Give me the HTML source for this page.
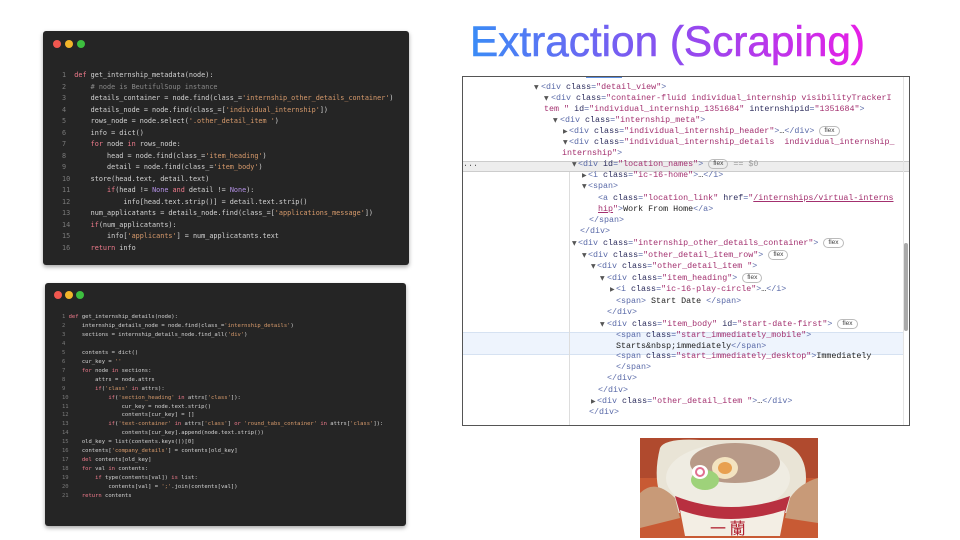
<!DOCTYPE html>
<html><head><meta charset="utf-8"><style>
*{margin:0;padding:0;box-sizing:border-box}
body{width:960px;height:540px;background:#fff;position:relative;overflow:hidden;font-family:"Liberation Sans",sans-serif}
.box{position:absolute;background:#252525;border-radius:3px;box-shadow:0 2px 4px rgba(0,0,0,.35)}
.dot{position:absolute;width:8px;height:8px;border-radius:50%}
.code{position:absolute;font-family:"DejaVu Sans Mono","Liberation Mono",monospace;color:#d4d4d4;white-space:pre}
.code div{position:absolute;left:0}
.n{color:#7a7a7a}.k{color:#f07b8c}.s{color:#d89b6c}.c{color:#8a8a8a}.v{color:#b592e8}
#dt{position:absolute;left:462px;top:76px;width:448px;height:350px;border:1.5px solid #555;background:#fff;overflow:hidden}
.l{position:absolute;font-family:"Liberation Mono",monospace;font-size:8.35px;white-space:pre;color:#222;line-height:11px}
.t{color:#5a6aa8}.a{color:#2c2c5c}.q{color:#a3306f}.u{color:#a3306f;text-decoration:underline}
.tri{position:absolute;font-size:6px;color:#555;font-family:"DejaVu Sans",sans-serif;line-height:11px}
.fl{display:inline-block;border:1px solid #bbb;border-radius:6px;font-size:6.5px;padding:0 4px;line-height:8px;color:#444;font-family:"Liberation Sans",sans-serif;vertical-align:1px}
</style></head><body>

<div class="box" style="left:43px;top:31px;width:366px;height:234px">
<div class="dot" style="left:10px;top:9px;background:#f0574f"></div>
<div class="dot" style="left:22px;top:9px;background:#f2b52a"></div>
<div class="dot" style="left:34px;top:9px;background:#3dbf3f"></div>
</div>
<div class="code" style="left:62px;top:70px;font-size:6.8px;line-height:11.5px">
<div style="top:0"><span class="n">1</span>  <span class="k">def</span> get_internship_metadata(node):</div>
<div style="top:11.5px"><span class="n">2</span>      <span class="c"># node is BeutifulSoup instance</span></div>
<div style="top:23px"><span class="n">3</span>      details_container = node.find(class_=<span class="s">'internship_other_details_container'</span>)</div>
<div style="top:34.5px"><span class="n">4</span>      details_node = node.find(class_=[<span class="s">'individual_internship'</span>])</div>
<div style="top:46px"><span class="n">5</span>      rows_node = node.select(<span class="s">'.other_detail_item '</span>)</div>
<div style="top:57.5px"><span class="n">6</span>      info = dict()</div>
<div style="top:69px"><span class="n">7</span>      <span class="k">for</span> node <span class="k">in</span> rows_node:</div>
<div style="top:80.5px"><span class="n">8</span>          head = node.find(class_=<span class="s">'item_heading'</span>)</div>
<div style="top:92px"><span class="n">9</span>          detail = node.find(class_=<span class="s">'item_body'</span>)</div>
<div style="top:103.5px"><span class="n">10</span>     store(head.text, detail.text)</div>
<div style="top:115px"><span class="n">11</span>         <span class="k">if</span>(head != <span class="v">None</span> <span class="k">and</span> detail != <span class="v">None</span>):</div>
<div style="top:126.5px"><span class="n">12</span>             info[head.text.strip()] = detail.text.strip()</div>
<div style="top:138px"><span class="n">13</span>     num_applicatants = details_node.find(class_=[<span class="s">'applications_message'</span>])</div>
<div style="top:149.5px"><span class="n">14</span>     <span class="k">if</span>(num_applicatants):</div>
<div style="top:161px"><span class="n">15</span>         info[<span class="s">'applicants'</span>] = num_applicatants.text</div>
<div style="top:172.5px"><span class="n">16</span>     <span class="k">return</span> info</div>
</div>

<div class="box" style="left:45px;top:283px;width:361px;height:243px">
<div class="dot" style="left:9px;top:8px;background:#f0574f"></div>
<div class="dot" style="left:20px;top:8px;background:#f2b52a"></div>
<div class="dot" style="left:31px;top:8px;background:#3dbf3f"></div>
</div>
<div class="code" style="left:62px;top:313px;font-size:5.5px;line-height:8.95px">
<div style="top:0"><span class="n">1</span> <span class="k">def</span> get_internship_details(node):</div>
<div style="top:8.95px"><span class="n">2</span>     internship_details_node = node.find(class_=<span class="s">'internship_details'</span>)</div>
<div style="top:17.9px"><span class="n">3</span>     sections = internship_details_node.find_all(<span class="s">'div'</span>)</div>
<div style="top:26.85px"><span class="n">4</span></div>
<div style="top:35.8px"><span class="n">5</span>     contents = dict()</div>
<div style="top:44.75px"><span class="n">6</span>     cur_key = <span class="s">''</span></div>
<div style="top:53.7px"><span class="n">7</span>     <span class="k">for</span> node <span class="k">in</span> sections:</div>
<div style="top:62.65px"><span class="n">8</span>         attrs = node.attrs</div>
<div style="top:71.6px"><span class="n">9</span>         <span class="k">if</span>(<span class="s">'class'</span> <span class="k">in</span> attrs):</div>
<div style="top:80.55px"><span class="n">10</span>            <span class="k">if</span>(<span class="s">'section_heading'</span> <span class="k">in</span> attrs[<span class="s">'class'</span>]):</div>
<div style="top:89.5px"><span class="n">11</span>                cur_key = node.text.strip()</div>
<div style="top:98.45px"><span class="n">12</span>                contents[cur_key] = []</div>
<div style="top:107.4px"><span class="n">13</span>            <span class="k">if</span>(<span class="s">'text-container'</span> <span class="k">in</span> attrs[<span class="s">'class'</span>] <span class="k">or</span> <span class="s">'round_tabs_container'</span> <span class="k">in</span> attrs[<span class="s">'class'</span>]):</div>
<div style="top:116.35px"><span class="n">14</span>                contents[cur_key].append(node.text.strip())</div>
<div style="top:125.3px"><span class="n">15</span>    old_key = list(contents.keys())[0]</div>
<div style="top:134.25px"><span class="n">16</span>    contents[<span class="s">'company_details'</span>] = contents[old_key]</div>
<div style="top:143.2px"><span class="n">17</span>    <span class="k">del</span> contents[old_key]</div>
<div style="top:152.15px"><span class="n">18</span>    <span class="k">for</span> val <span class="k">in</span> contents:</div>
<div style="top:161.1px"><span class="n">19</span>        <span class="k">if</span> type(contents[val]) <span class="k">is</span> list:</div>
<div style="top:170.05px"><span class="n">20</span>            contents[val] = <span class="s">';'</span>.join(contents[val])</div>
<div style="top:179px"><span class="n">21</span>    <span class="k">return</span> contents</div>
</div>

<svg style="position:absolute;left:0;top:0" width="960" height="80">
<defs><linearGradient id="g" x1="470" y1="0" x2="866" y2="0" gradientUnits="userSpaceOnUse">
<stop offset="0" stop-color="#3a8cf6"/><stop offset="0.5" stop-color="#8a4ff0"/><stop offset="1" stop-color="#e81ee6"/></linearGradient></defs>
<text x="470" y="56" font-family="Liberation Sans, sans-serif" font-size="43" fill="url(#g)" stroke="url(#g)" stroke-width="0.6" textLength="395" lengthAdjust="spacingAndGlyphs">Extraction (Scraping)</text>
</svg>

<div id="dt">
<div style="position:absolute;left:0;top:84px;width:446px;height:11px;background:#ededed;border-top:1px solid #ccc;border-bottom:1px solid #ccc"></div>
<div style="position:absolute;left:0;top:255px;width:440px;height:23px;background:#eef4fd;border-top:1px solid #d6e2f2;border-bottom:1px solid #d6e2f2"></div>
<div style="position:absolute;left:106px;top:95px;width:1px;height:260px;background:#ddd"></div>
<div style="position:absolute;left:123px;top:-1px;width:36px;height:2px;background:#5a8de0"></div>
<div style="position:absolute;left:440px;top:0;width:1px;height:350px;background:#e4e4e4"></div>
<div style="position:absolute;left:441px;top:166px;width:4px;height:88px;background:#aaa;border-radius:2px"></div>
</div>
<div class="l" style="left:463px;top:159px;color:#555">...</div>
<div class="tri" style="left:534px;top:82px">▼</div><div class="l" style="left:541px;top:82px"><span class="t">&lt;div </span><span class="a">class</span><span class="t">=</span><span class="q">"detail_view"</span><span class="t">&gt;</span></div>
<div class="tri" style="left:544px;top:93px">▼</div><div class="l" style="left:551px;top:93px"><span class="t">&lt;div </span><span class="a">class</span><span class="t">=</span><span class="q">"container-fluid individual_internship visibilityTrackerI</span></div>
<div class="l" style="left:544px;top:104px"><span class="q">tem "</span> <span class="a">id</span><span class="t">=</span><span class="q">"individual_internship_1351684"</span> <span class="a">internshipid</span><span class="t">=</span><span class="q">"1351684"</span><span class="t">&gt;</span></div>
<div class="tri" style="left:553px;top:115px">▼</div><div class="l" style="left:560px;top:115px"><span class="t">&lt;div </span><span class="a">class</span><span class="t">=</span><span class="q">"internship_meta"</span><span class="t">&gt;</span></div>
<div class="tri" style="left:563px;top:126px">▶</div><div class="l" style="left:569px;top:126px"><span class="t">&lt;div </span><span class="a">class</span><span class="t">=</span><span class="q">"individual_internship_header"</span><span class="t">&gt;</span>…<span class="t">&lt;/div&gt;</span> <span class="fl">flex</span></div>
<div class="tri" style="left:563px;top:137px">▼</div><div class="l" style="left:569px;top:137px"><span class="t">&lt;div </span><span class="a">class</span><span class="t">=</span><span class="q">"individual_internship_details  individual_internship_</span></div>
<div class="l" style="left:562px;top:148px"><span class="q">internship"</span><span class="t">&gt;</span></div>
<div class="tri" style="left:572px;top:159px">▼</div><div class="l" style="left:578px;top:159px"><span class="t">&lt;div </span><span class="a">id</span><span class="t">=</span><span class="q">"location_names"</span><span class="t">&gt;</span> <span class="fl">flex</span> <span style="color:#999">== $0</span></div>
<div class="tri" style="left:582px;top:170px">▶</div><div class="l" style="left:588px;top:170px"><span class="t">&lt;i </span><span class="a">class</span><span class="t">=</span><span class="q">"ic-16-home"</span><span class="t">&gt;</span>…<span class="t">&lt;/i&gt;</span></div>
<div class="tri" style="left:582px;top:181px">▼</div><div class="l" style="left:588px;top:181px"><span class="t">&lt;span&gt;</span></div>
<div class="l" style="left:598px;top:193px"><span class="t">&lt;a </span><span class="a">class</span><span class="t">=</span><span class="q">"location_link"</span> <span class="a">href</span><span class="t">=</span><span class="q">"</span><span class="u">/internships/virtual-interns</span></div>
<div class="l" style="left:598px;top:204px"><span class="u">hip</span><span class="q">"</span><span class="t">&gt;</span>Work From Home<span class="t">&lt;/a&gt;</span></div>
<div class="l" style="left:589px;top:215px"><span class="t">&lt;/span&gt;</span></div>
<div class="l" style="left:580px;top:226px"><span class="t">&lt;/div&gt;</span></div>
<div class="tri" style="left:572px;top:238px">▼</div><div class="l" style="left:578px;top:238px"><span class="t">&lt;div </span><span class="a">class</span><span class="t">=</span><span class="q">"internship_other_details_container"</span><span class="t">&gt;</span> <span class="fl">flex</span></div>
<div class="tri" style="left:582px;top:250px">▼</div><div class="l" style="left:588px;top:250px"><span class="t">&lt;div </span><span class="a">class</span><span class="t">=</span><span class="q">"other_detail_item_row"</span><span class="t">&gt;</span> <span class="fl">flex</span></div>
<div class="tri" style="left:591px;top:261px">▼</div><div class="l" style="left:597px;top:261px"><span class="t">&lt;div </span><span class="a">class</span><span class="t">=</span><span class="q">"other_detail_item "</span><span class="t">&gt;</span></div>
<div class="tri" style="left:600px;top:273px">▼</div><div class="l" style="left:607px;top:273px"><span class="t">&lt;div </span><span class="a">class</span><span class="t">=</span><span class="q">"item_heading"</span><span class="t">&gt;</span> <span class="fl">flex</span></div>
<div class="tri" style="left:610px;top:284px">▶</div><div class="l" style="left:616px;top:284px"><span class="t">&lt;i </span><span class="a">class</span><span class="t">=</span><span class="q">"ic-16-play-circle"</span><span class="t">&gt;</span>…<span class="t">&lt;/i&gt;</span></div>
<div class="l" style="left:616px;top:296px"><span class="t">&lt;span&gt;</span> Start Date <span class="t">&lt;/span&gt;</span></div>
<div class="l" style="left:607px;top:307px"><span class="t">&lt;/div&gt;</span></div>
<div class="tri" style="left:600px;top:319px">▼</div><div class="l" style="left:607px;top:319px"><span class="t">&lt;div </span><span class="a">class</span><span class="t">=</span><span class="q">"item_body"</span> <span class="a">id</span><span class="t">=</span><span class="q">"start-date-first"</span><span class="t">&gt;</span> <span class="fl">flex</span></div>
<div class="l" style="left:616px;top:330px"><span class="t">&lt;span </span><span class="a">class</span><span class="t">=</span><span class="q">"start_immediately_mobile"</span><span class="t">&gt;</span></div>
<div class="l" style="left:616px;top:341px">Starts&amp;nbsp;immediately<span class="t">&lt;/span&gt;</span></div>
<div class="l" style="left:616px;top:351px"><span class="t">&lt;span </span><span class="a">class</span><span class="t">=</span><span class="q">"start_immediately_desktop"</span><span class="t">&gt;</span>Immediately</div>
<div class="l" style="left:616px;top:362px"><span class="t">&lt;/span&gt;</span></div>
<div class="l" style="left:607px;top:373px"><span class="t">&lt;/div&gt;</span></div>
<div class="l" style="left:598px;top:385px"><span class="t">&lt;/div&gt;</span></div>
<div class="tri" style="left:591px;top:396px">▶</div><div class="l" style="left:597px;top:396px"><span class="t">&lt;div </span><span class="a">class</span><span class="t">=</span><span class="q">"other_detail_item "</span><span class="t">&gt;</span>…<span class="t">&lt;/div&gt;</span></div>
<div class="l" style="left:589px;top:407px"><span class="t">&lt;/div&gt;</span></div>

<svg style="position:absolute;left:640px;top:438px" width="178" height="100" viewBox="0 0 178 100">
<rect width="178" height="100" fill="#c85a34"/>
<rect x="0" y="0" width="178" height="40" fill="#b04a2e"/>
<path d="M20 10 Q25 0 60 2 L130 2 Q160 6 165 30 Q170 55 150 75 L30 75 Q10 50 20 10Z" fill="#e9e4d6"/>
<ellipse cx="88" cy="40" rx="62" ry="34" fill="#efece2"/>
<ellipse cx="95" cy="25" rx="45" ry="20" fill="#b89a88"/>
<ellipse cx="85" cy="30" rx="13" ry="11" fill="#f3e3c0"/><ellipse cx="85" cy="30" rx="7" ry="6" fill="#e8a050"/>
<ellipse cx="65" cy="42" rx="14" ry="10" fill="#9ed27a"/>
<ellipse cx="60" cy="34" rx="8" ry="7" fill="#fff"/><circle cx="60" cy="34" r="4" fill="none" stroke="#e07090" stroke-width="2"/>
<path d="M35 58 Q90 80 150 58 L145 75 Q90 92 40 75Z" fill="#b83040"/>
<path d="M40 72 Q90 90 145 72 L140 98 L45 98Z" fill="#f3eee4"/>
<text x="70" y="96" font-size="16" fill="#b02030" font-family="Noto Sans CJK JP, sans-serif">一 蘭</text>
<path d="M0 55 Q15 40 35 60 L40 80 L0 90Z" fill="#c89a78"/>
<path d="M178 40 Q160 45 150 60 L145 80 L178 85Z" fill="#c89a78"/>
</svg>
</body></html>
